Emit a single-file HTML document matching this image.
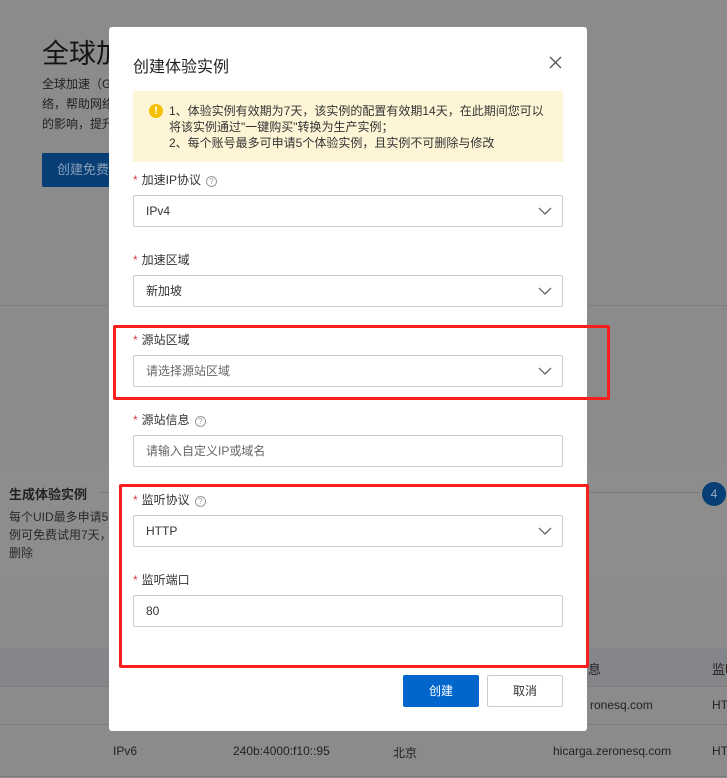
<!DOCTYPE html>
<html style="background:#8b8b8b"><head><meta charset="utf-8"><style>
*{box-sizing:border-box;margin:0;padding:0}
html,body{background:#8b8b8b}
body{width:727px;height:778px;overflow:hidden;font-family:"Liberation Sans","Noto Sans CJK SC",sans-serif;position:relative;color:#1a1a1a}
.a{position:absolute;white-space:nowrap}
.modal{position:absolute;left:109px;top:27px;width:478px;height:704px;background:#fff;border-radius:3px}
.lbl{position:absolute;left:24px;font-size:12px;color:#333}
.lbl i{font-style:normal;color:#d9363e;margin-right:4px}
.q{display:inline-block;width:11px;height:11px;border:1px solid #999;border-radius:50%;font-size:8px;line-height:9px;text-align:center;color:#999;margin-left:5px;vertical-align:0}
.inp{position:absolute;left:24px;width:430px;height:32px;border:1px solid #ccc;border-radius:2px;font-size:12px;line-height:30px;padding-left:12px;color:#333}
.ph{color:#666}
.chev{position:absolute;right:10px;top:10px;width:14px;height:10px}
.red{position:absolute;border:3px solid #fa1e1e;border-radius:2px}
</style></head><body>
<div class="a" style="left:0;top:0;width:727px;height:778px;background:#8b8b8b"></div>
<div class="a" style="left:42px;top:32px;font-size:27px;color:#141414">全球加速</div>
<div class="a" style="left:42px;top:74px;font-size:12px;line-height:20px;color:#1f1f1f">全球加速（G<br>络，帮助网络<br>的影响，提升</div>
<div class="a" style="left:42px;top:153px;width:80px;height:34px;background:#073e76;border-radius:2px;color:#8aa0b8;font-size:13px;line-height:34px;padding-left:15px">创建免费</div>
<div class="a" style="left:0;top:305px;width:727px;height:1px;background:#7e7e7e"></div>
<div class="a" style="left:0;top:466px;width:727px;height:110px;background:#8d8d8d"></div>
<div class="a" style="left:9px;top:484px;font-size:13px;font-weight:bold;color:#222">生成体验实例</div>
<div class="a" style="left:100px;top:492px;width:600px;height:1px;background:#7a7a7a"></div>
<div class="a" style="left:9px;top:508px;font-size:12px;line-height:18px;color:#2a2a2a">每个UID最多申请5个<br>例可免费试用7天，<br>删除</div>
<div class="a" style="left:702px;top:482px;width:24px;height:24px;border-radius:50%;background:#073e76;color:#9ab;font-size:12px;line-height:24px;text-align:center">4</div>
<div class="a" style="left:0;top:648px;width:727px;height:38px;background:#84868a"></div>
<div class="a" style="left:0;top:686px;width:727px;height:1px;background:#7c7c7c"></div>
<div class="a" style="left:0;top:724px;width:727px;height:1px;background:#7c7c7c"></div>
<div class="a" style="left:0;top:776px;width:727px;height:1px;background:#7c7c7c"></div>
<div class="a" style="left:588px;top:659px;font-size:13px;color:#222">息</div>
<div class="a" style="left:712px;top:659px;font-size:13px;color:#222">监听</div>
<div class="a" style="left:590px;top:698px;font-size:12px;color:#222">ronesq.com</div>
<div class="a" style="left:712px;top:698px;font-size:12px;color:#222">HTTP</div>
<div class="a" style="left:113px;top:744px;font-size:12px;color:#222">IPv6</div>
<div class="a" style="left:233px;top:744px;font-size:12px;color:#222">240b:4000:f10::95</div>
<div class="a" style="left:393px;top:744px;font-size:12px;color:#222">北京</div>
<div class="a" style="left:553px;top:744px;font-size:12px;color:#222">hicarga.zeronesq.com</div>
<div class="a" style="left:712px;top:744px;font-size:12px;color:#222">HTTP</div>

<div class="modal">
 <div class="a" style="left:24px;top:26px;font-size:16px;color:#222">创建体验实例</div>
 <svg class="a" style="left:440px;top:29px" width="13" height="13" viewBox="0 0 13 13"><path d="M1 1L12 12M12 1L1 12" stroke="#555" stroke-width="1.3"/></svg>
 <div class="a" style="left:24px;top:64px;width:430px;height:71px;background:#fdf5d6"></div>
 <div class="a" style="left:40px;top:77px;width:14px;height:14px;border-radius:50%;background:#f5c000;color:#fff;font-size:11px;font-weight:bold;line-height:14px;text-align:center">!</div>
 <div class="a" style="left:60px;top:76px;font-size:12px;line-height:16px;color:#333">1、体验实例有效期为7天，该实例的配置有效期14天，在此期间您可以<br>将该实例通过"一键购买"转换为生产实例；<br>2、每个账号最多可申请5个体验实例，且实例不可删除与修改</div>

 <div class="lbl" style="top:144px"><i>*</i>加速IP协议<span class="q">?</span></div>
 <div class="inp" style="top:168px">IPv4<svg class="chev" viewBox="0 0 14 10"><path d="M1 2L7 8L13 2" fill="none" stroke="#666" stroke-width="1.3"/></svg></div>
 <div class="lbl" style="top:224px"><i>*</i>加速区域</div>
 <div class="inp" style="top:248px">新加坡<svg class="chev" viewBox="0 0 14 10"><path d="M1 2L7 8L13 2" fill="none" stroke="#666" stroke-width="1.3"/></svg></div>
 <div class="lbl" style="top:304px"><i>*</i>源站区域</div>
 <div class="inp ph" style="top:328px">请选择源站区域<svg class="chev" viewBox="0 0 14 10"><path d="M1 2L7 8L13 2" fill="none" stroke="#666" stroke-width="1.3"/></svg></div>
 <div class="lbl" style="top:384px"><i>*</i>源站信息<span class="q">?</span></div>
 <div class="inp ph" style="top:408px">请输入自定义IP或域名</div>
 <div class="lbl" style="top:464px"><i>*</i>监听协议<span class="q">?</span></div>
 <div class="inp" style="top:488px">HTTP<svg class="chev" viewBox="0 0 14 10"><path d="M1 2L7 8L13 2" fill="none" stroke="#666" stroke-width="1.3"/></svg></div>
 <div class="lbl" style="top:544px"><i>*</i>监听端口</div>
 <div class="inp" style="top:568px">80</div>
 <div class="a" style="left:294px;top:648px;width:76px;height:32px;background:#0066cc;border-radius:2px;color:#fff;font-size:12px;line-height:32px;text-align:center">创建</div>
 <div class="a" style="left:378px;top:648px;width:76px;height:32px;border:1px solid #ccc;border-radius:2px;color:#333;font-size:12px;line-height:30px;text-align:center">取消</div>
</div>
<div class="red" style="left:113px;top:325px;width:497px;height:75px"></div>
<div class="red" style="left:119px;top:484px;width:470px;height:184px"></div>
</body></html>
